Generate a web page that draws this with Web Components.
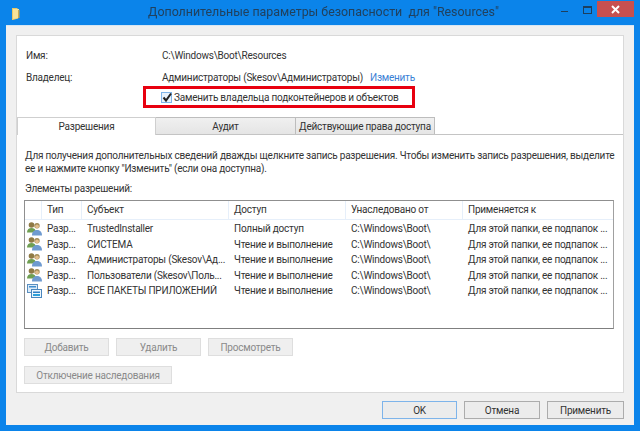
<!DOCTYPE html>
<html>
<head>
<meta charset="utf-8">
<style>
  html, body { margin: 0; padding: 0; }
  body { width: 640px; height: 431px; overflow: hidden; font: 10px Roboto, "Liberation Sans", sans-serif; letter-spacing: -0.22px; color: #333; }
</style>
</head>
<body>
<security-window caption='Дополнительные параметры безопасности  для "Resources"'>
  <info-row label="Имя:" value="C:\Windows\Boot\Resources"></info-row>
  <info-row label="Владелец:" value="Администраторы (Skesov\Администраторы)" action="Изменить"></info-row>
  <owner-check>Заменить владельца подконтейнеров и объектов</owner-check>
  <tab-strip></tab-strip>
  <tab-pane>
    <perm-list></perm-list>
  </tab-pane>
  <dialog-button slot="footer" focused>OK</dialog-button>
  <dialog-button slot="footer">Отмена</dialog-button>
  <dialog-button slot="footer" width="77">Применить</dialog-button>
</security-window>

<script>
class SecurityWindow extends HTMLElement {
  constructor() {
    super();
    this.attachShadow({ mode: 'open' });
    this.shadowRoot.innerHTML = `
      <style>
        :host { display: flex; flex-direction: column; width: 640px; height: 431px; box-sizing: border-box; background: #0b84ea; padding: 0 6px 7px; filter: blur(0.3px); }
        .title { height: 25px; flex: none; display: flex; align-items: center; position: relative; }
        .icon { margin-left: 3px; width: 14px; height: 14px; flex: none; }
        .caption { position: absolute; left: 0; right: -7px; top: 3px; text-align: center; font-size: 12.4px; letter-spacing: 0; line-height: 18px; color: #21415e; white-space: pre; }
        .controls { margin-left: auto; display: flex; align-items: flex-start; align-self: flex-start; }
        .min, .max { width: 26px; height: 19px; position: relative; }
        .min::after { content: ""; position: absolute; left: 19px; top: 11px; width: 7px; height: 1px; background: #1d3f5e; }
        .max::after { content: ""; position: absolute; left: 15px; top: 6px; width: 7px; height: 5px; border: 1px solid #1d3f5e; border-top-width: 2px; }
        .close { width: 37px; height: 16px; margin: 1px 0 0 3px; background: #c75050; display: flex; align-items: center; justify-content: center; }
        .body { flex: 1; background: #f0f0f0; padding: 9px 10px 6px; display: flex; flex-direction: column; border-top: 1px solid #d6e6f4; box-sizing: border-box; }
        .panel { height: 358px; flex: none; box-sizing: border-box; background: #fff; border: 1px solid #d9d9d9; padding-top: 8px; }
        .footer { display: flex; justify-content: flex-end; gap: 7px; margin-top: 8px; }
      </style>
      <div class="title">
        <svg class="icon" viewBox="0 0 14 14">
          <path d="M3 2h5l1 1v9.500L4 14H3z" fill="#e8c868"/>
          <path d="M4 3h6v9l-6 1z" fill="#f6e39a"/>
          <path d="M9 4h1.500v8H9z" fill="#c9a650"/>
        </svg>
        <div class="caption"></div>
        <div class="controls">
          <div class="min"></div>
          <div class="max"></div>
          <div class="close">
            <svg width="9" height="9" viewBox="0 0 9 9"><path d="M1 1l7 7M8 1L1 8" stroke="#fff" stroke-width="2"/></svg>
          </div>
        </div>
      </div>
      <div class="body">
        <div class="panel"><slot></slot></div>
        <div class="footer"><slot name="footer"></slot></div>
      </div>`;
  }

  connectedCallback() {
    this.shadowRoot.querySelector('.caption').textContent = this.getAttribute('caption');
  }
}

class InfoRow extends HTMLElement {
  constructor() {
    super();
    this.attachShadow({ mode: 'open' });
    this.shadowRoot.innerHTML = `
      <style>
        :host { display: flex; height: 22px; align-items: center; white-space: nowrap; padding-left: 9px; }
        .label { width: 136px; flex: none; }
        .link { color: #3a7fd5; margin-left: 7px; }
      </style>
      <span class="label"></span><span class="value"></span><span class="link"></span>`;
  }

  connectedCallback() {
    this.shadowRoot.querySelector('.label').textContent = this.getAttribute('label');
    this.shadowRoot.querySelector('.value').textContent = this.getAttribute('value');
    this.shadowRoot.querySelector('.link').textContent = this.getAttribute('action') || '';
  }
}

class OwnerCheck extends HTMLElement {
  constructor() {
    super();
    this.attachShadow({ mode: 'open' });
    this.shadowRoot.innerHTML = `
      <style>
        :host { display: flex; align-items: center; height: 18px; padding-left: 144px; white-space: nowrap; position: relative; }
        .box { width: 9px; height: 9px; border: 1px solid #7eb4ea; background: #e8f2fc; margin-right: 2px; position: relative; flex: none; }
        svg { position: absolute; left: 0; top: -1px; }
        .mark { position: absolute; left: 126px; top: -2px; width: 266px; height: 16px; border: 3px solid #e8000f; }
      </style>
      <span class="box"><svg width="11" height="11" viewBox="0 0 11 11"><path d="M1.500 5.500l2.500 3L9 1.500" fill="none" stroke="#222" stroke-width="2"/></svg></span>
      <slot></slot>
      <div class="mark"></div>`;
  }
}

class TabStrip extends HTMLElement {
  constructor() {
    super();
    this.attachShadow({ mode: 'open' });
    this.shadowRoot.innerHTML = `
      <style>
        :host { display: flex; height: 18px; box-sizing: border-box; margin-top: 11px; white-space: nowrap; border-bottom: 1px solid #c4c4c4; }
        .tab { height: 17px; box-sizing: border-box; border: 1px solid #bdbdbd; border-bottom: none; margin-left: -1px; background: linear-gradient(#f0f0f0, #e5e5e5); display: flex; align-items: center; justify-content: center; }
        .tab.active { margin-left: 0; background: #fff; border-color: #cfcfcf; height: 18px; position: relative; z-index: 1; }
      </style>
      <div class="tab active" style="width:139px">Разрешения</div>
      <div class="tab" style="width:141px">Аудит</div>
      <div class="tab" style="width:140px">Действующие права доступа</div>`;
  }
}

class TabPane extends HTMLElement {
  constructor() {
    super();
    this.attachShadow({ mode: 'open' });
    this.shadowRoot.innerHTML = `
      <style>
        :host { display: block; padding-top: 14px; }
        p { margin: 0; line-height: 13px; white-space: nowrap; padding-left: 8px; }
        .hint { margin-bottom: 7px; }
        .items { margin-bottom: 5px; }
        .wrap { padding: 0 9px 0 7px; }
        .actions { display: flex; gap: 7px; margin-top: 9px; }
        .actions.second { margin-top: 10px; }
      </style>
      <p>Для получения дополнительных сведений дважды щелкните запись разрешения. Чтобы изменить запись разрешения, выделите</p>
      <p class="hint">ее и нажмите кнопку "Изменить" (если она доступна).</p>
      <p class="items">Элементы разрешений:</p>
      <div class="wrap">
        <slot></slot>
        <div class="actions">
          <dialog-button disabled width="85">Добавить</dialog-button>
          <dialog-button disabled width="85">Удалить</dialog-button>
          <dialog-button disabled width="85">Просмотреть</dialog-button>
        </div>
        <div class="actions second">
          <dialog-button disabled width="148">Отключение наследования</dialog-button>
        </div>
      </div>`;
  }
}

const usersIcon = `<svg width="15" height="14" viewBox="0 0 15 14">
  <circle cx="4.500" cy="3" r="2.800" fill="#8f7a45"/>
  <path d="M0 10.500c0-3.200 2-4.500 4.500-4.500s4.500 1.300 4.500 4.500z" fill="#6f9f52"/>
  <circle cx="10" cy="3.800" r="2.700" fill="#a08a55"/>
  <circle cx="10" cy="4.400" r="1.900" fill="#e2bd8c"/>
  <path d="M5 13.500c0-4 2.300-5.500 5-5.500s5 1.500 5 5.500z" fill="#6f9bd0"/>
</svg>`;

const packagesIcon = `<svg width="15" height="14" viewBox="0 0 15 14">
  <rect x="0.500" y="0.500" width="10" height="8" fill="#dcebf8" stroke="#5a8fc0"/>
  <rect x="2" y="2" width="7" height="1.500" fill="#3f8ecf"/>
  <rect x="4.500" y="5.500" width="10" height="8" fill="#eef6fc" stroke="#4a86bd"/>
  <rect x="6" y="7.500" width="7" height="1.500" fill="#2f7fc4"/>
  <rect x="6" y="10" width="7" height="2" fill="#2c9fd8"/>
</svg>`;

const permRows = [
  [usersIcon, 'TrustedInstaller', 'Полный доступ'],
  [usersIcon, 'СИСТЕМА', 'Чтение и выполнение'],
  [usersIcon, 'Администраторы (Skesov\\Ад...', 'Чтение и выполнение'],
  [usersIcon, 'Пользователи (Skesov\\Поль...', 'Чтение и выполнение'],
  [packagesIcon, 'ВСЕ ПАКЕТЫ ПРИЛОЖЕНИЙ', 'Чтение и выполнение']
];

class PermList extends HTMLElement {
  constructor() {
    super();
    this.attachShadow({ mode: 'open' });
    const cols = 'grid-template-columns: 17px 40px 147px 117px 117px 1fr';
    const rows = permRows.map(([icon, who, access]) => `
      <div class="row" style="${cols}">
        <span class="ic">${icon}</span>
        <span>Разр...</span>
        <span>${who}</span>
        <span>${access}</span>
        <span>C:\\Windows\\Boot\\</span>
        <span>Для этой папки, ее подпапок ...</span>
      </div>`).join('');
    this.shadowRoot.innerHTML = `
      <style>
        :host { display: block; height: 129px; box-sizing: border-box; border: 1px solid #8f8f8f; border-bottom-color: #7f7f7f; border-right-color: #a0a0a0; white-space: nowrap; }
        .head { display: grid; height: 19px; box-sizing: border-box; align-items: center; border-bottom: 1px solid #e6effa; margin-bottom: 1px; }
        .head span { height: 18px; line-height: 18px; border-right: 1px solid #e6effa; padding-left: 5px; }
        .head span:last-child { border-right: none; }
        .row { display: grid; height: 15.500px; align-items: center; }
        .row span { padding-left: 5px; overflow: hidden; }
        .row .ic { padding-left: 2px; display: flex; }
      </style>
      <div class="head" style="${cols}">
        <span></span><span>Тип</span><span>Субъект</span><span>Доступ</span><span>Унаследовано от</span><span>Применяется к</span>
      </div>
      ${rows}`;
  }
}

class DialogButton extends HTMLElement {
  constructor() {
    super();
    this.attachShadow({ mode: 'open' });
    this.shadowRoot.innerHTML = `
      <style>
        :host { display: flex; width: 76px; height: 18px; box-sizing: border-box; align-items: center; justify-content: center; border: 1px solid #acacac; background: #ececec; white-space: nowrap; }
        :host([focused]) { border-color: #7eb4ea; width: 75px; }
        :host([disabled]) { border-color: #dedede; background: #efefef; color: #8a8a8a; }
      </style>
      <slot></slot>`;
  }

  connectedCallback() {
    if (this.hasAttribute('width')) this.style.width = this.getAttribute('width') + 'px';
  }
}

customElements.define('security-window', SecurityWindow);
customElements.define('info-row', InfoRow);
customElements.define('owner-check', OwnerCheck);
customElements.define('tab-strip', TabStrip);
customElements.define('tab-pane', TabPane);
customElements.define('perm-list', PermList);
customElements.define('dialog-button', DialogButton);
</script>
</body>
</html>
